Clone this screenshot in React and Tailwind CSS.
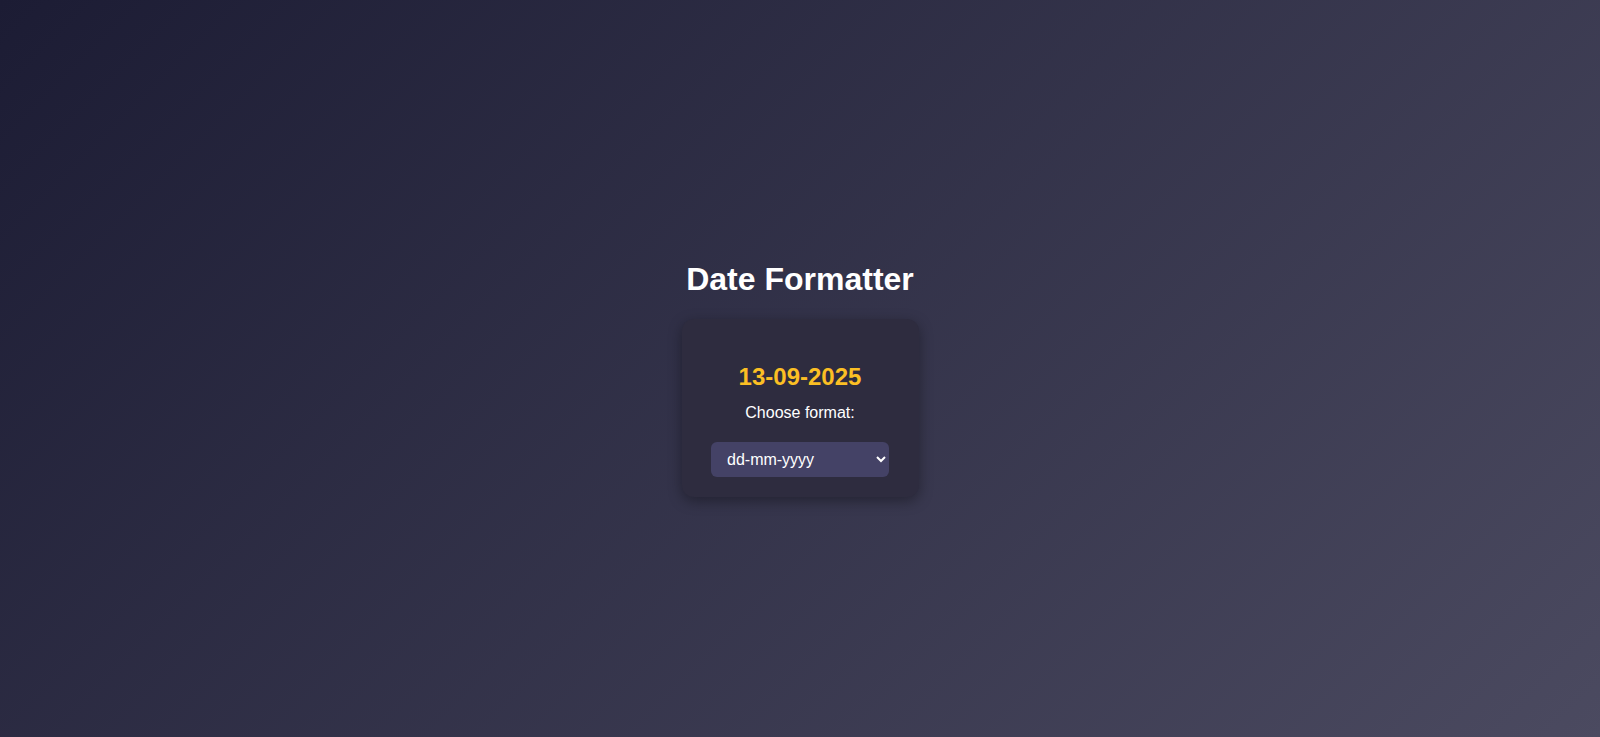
import { useState } from "react";

const FORMATS = ["dd-mm-yyyy", "mm-dd-yyyy", "yyyy-mm-dd"];

const formatDate = (date, fmt) => {
  const dd = String(date.getDate()).padStart(2, "0");
  const mm = String(date.getMonth() + 1).padStart(2, "0");
  const yyyy = String(date.getFullYear());
  return fmt.replace("dd", dd).replace("mm", mm).replace("yyyy", yyyy);
};

const App = () => {
  const [format, setFormat] = useState("dd-mm-yyyy");
  const today = new Date(2025, 8, 13);

  return (
    <div className="min-h-screen w-full flex flex-col items-center justify-center bg-[linear-gradient(135deg,#1c1c34_0%,#4b4a60_100%)] font-['Liberation_Sans',Arial,sans-serif] text-white">
      <h1 className="my-[21.44px] text-[32px] leading-[36.8px] font-bold">
        Date Formatter
      </h1>

      {/* Card */}
      <div className="w-[237px] flex flex-col items-center pt-[44px] pb-5 bg-[#2e2c3f] rounded-xl shadow-[0_4px_14px_rgba(0,0,0,0.35)]">
        <h2 className="text-2xl leading-[27px] font-bold text-[#fbbf24]">
          {formatDate(today, format)}
        </h2>
        <p className="mt-[14px] text-base leading-[18px]">Choose format:</p>
        <select
          value={format}
          onChange={(e) => setFormat(e.target.value)}
          className="mt-5 h-[35px] w-[178px] pl-3 pr-1 bg-[#444266] rounded-md text-base text-white outline-none cursor-pointer"
        >
          {FORMATS.map((f) => (
            <option key={f} value={f}>
              {f}
            </option>
          ))}
        </select>
      </div>
    </div>
  );
};

export default App;
